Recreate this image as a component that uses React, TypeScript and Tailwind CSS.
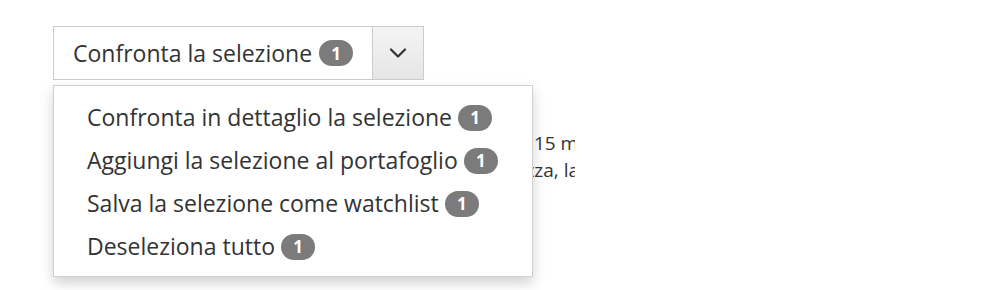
const items = [
  'Confronta in dettaglio la selezione',
  'Aggiungi la selezione al portafoglio',
  'Salva la selezione come watchlist',
  'Deseleziona tutto',
]

function Badge() {
  return (
    <span className="inline-flex h-[26px] min-w-[34px] items-center justify-center rounded-full bg-[#7b7b7b] px-2 text-[17px] font-bold leading-none text-white">
      1
    </span>
  )
}

export default function App() {
  return (
    <div className="min-h-[290px] w-[983px] bg-white pl-[53px] pt-[26px] text-[#333] [font-family:'Open_Sans',sans-serif]">
      <div className="relative w-fit">
        {/* split button */}
        <div className="flex h-[54px]">
          <button className="flex items-center gap-[7px] border border-[#ccc] bg-white pl-[19px] pr-[19px] text-[23px]">
            Confronta la selezione <Badge />
          </button>
          <button className="-ml-px flex w-[52px] items-center justify-center border border-[#ccc] bg-gradient-to-b from-[#f4f4f4] to-[#e6e6e6]">
            <svg width="18" height="10" viewBox="0 0 18 10" fill="none" stroke="#333" strokeWidth="2.2" strokeLinecap="round" strokeLinejoin="round">
              <path d="M2 1.5 L9 8.5 L16 1.5" />
            </svg>
          </button>
        </div>

        {/* menu */}
        <div className="absolute left-0 top-[59px] z-10 w-[480px] border border-[#d0d0d0] bg-white pb-[8px] pt-[10px] shadow-[0_6px_12px_rgba(0,0,0,0.18)]">
          {items.map(t => (
            <div key={t} className="flex h-[43px] items-center gap-[6px] whitespace-nowrap pl-[33px] text-[23px]">
              {t} <Badge />
            </div>
          ))}
        </div>
      </div>

      {/* page text behind the menu, clipped at its column edge */}
      <div className="-ml-[3px] mt-[50px] w-[525px] overflow-hidden text-[19px] leading-[27px]">
        <div className="-mr-[8px] flex justify-end whitespace-nowrap">
          <span>Le quotazioni sono aggiornate con un ritardo di 15 mi</span>
        </div>
        <div className="-mr-[4px] flex justify-end whitespace-nowrap">
          <span>Per informazioni sulla sicurezza, la</span>
        </div>
      </div>
    </div>
  )
}
